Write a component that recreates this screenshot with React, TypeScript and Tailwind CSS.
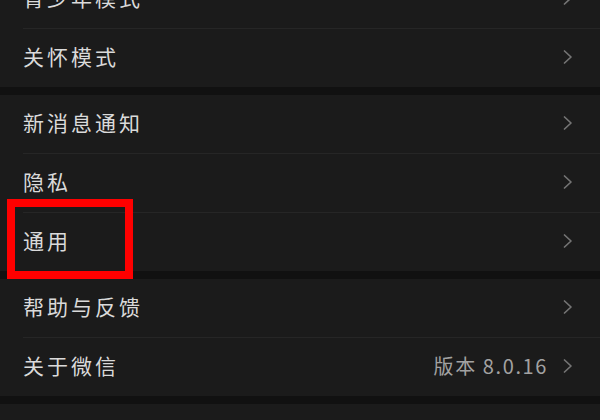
type Item = { label: string; value?: string };

const sections: Item[][] = [
  [{ label: '青少年模式' }, { label: '关怀模式' }],
  [{ label: '新消息通知' }, { label: '隐私' }, { label: '通用' }],
  [{ label: '帮助与反馈' }, { label: '关于微信', value: '版本 8.0.16' }],
];

function Chevron() {
  return (
    <svg width="12" height="18" viewBox="0 0 12 18" fill="none" className="text-[#747474]">
      <path d="M2.5 3 L9 9 L2.5 15" stroke="currentColor" strokeWidth="1.7" strokeLinecap="round" strokeLinejoin="round" />
    </svg>
  );
}

function Row({ item }: { item: Item }) {
  return (
    <div className="flex h-[58px] items-center justify-between pb-[2px] pl-[23px] pr-[26px]">
      <span className="text-[21px] tracking-[3px] text-[#dadada]">{item.label}</span>
      <div className="flex items-center gap-[14px]">
        {item.value && (
          <span className="text-[20px] tracking-[1.6px] text-[#a2a2a2]">{item.value}</span>
        )}
        <Chevron />
      </div>
    </div>
  );
}

export default function App() {
  return (
    <div
      className="relative h-[420px] w-[600px] overflow-hidden bg-[#111111]"
      style={{ fontFamily: '"Noto Sans CJK SC", "Noto Sans", sans-serif' }}
    >
      <div className="-mt-[30px] flex flex-col gap-[8px]">
        {sections.map((section, i) => (
          <div key={i} className="bg-[#1b1b1b]">
            {section.map((item, j) => (
              <div key={item.label}>
                {j > 0 && <div className="ml-[23px] h-px bg-[#262626]" />}
                <Row item={item} />
              </div>
            ))}
          </div>
        ))}
        <div className="h-[40px] bg-[#1b1b1b]" />
      </div>

      {/* highlight box */}
      <div className="absolute left-[7px] top-[199px] h-[80px] w-[126px] border-[8px] border-[#ff0000]" />
    </div>
  );
}
